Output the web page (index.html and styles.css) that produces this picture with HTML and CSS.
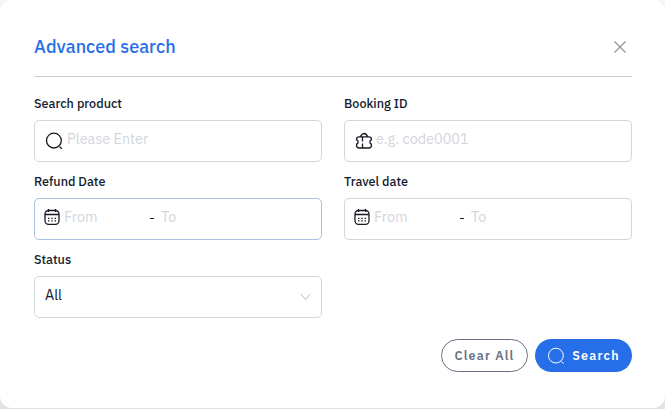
FILE: index.html
```html
<!DOCTYPE html>
<html lang="en">
<head>
<meta charset="utf-8">
<title>Advanced search</title>
<link rel="stylesheet" href="styles.css">
</head>
<body>
<svg class="defs" aria-hidden="true">
  <symbol id="search" viewBox="0 0 18 18"><circle cx="8.9" cy="8.6" r="7.4"/><path d="M14.8 14.6l.8 1.500M15.700 15.600l1.100 1.100"/></symbol>
  <symbol id="calendar" viewBox="0 0 16 18"><rect x="1" y="2.500" width="14" height="13.800" rx="3.500"/><path d="M1 6.500h14M4.500 1v3M11.500 1v3"/><path class="dots" d="M4 10.300h1.400M7.300 10.300h1.400M10.600 10.300H12M4 12.800h1.400M7.300 12.800h1.400M10.600 12.800H12"/></symbol>
  <symbol id="ticket" viewBox="0 0 18 18"><path d="M4 4.900h10c1.500 0 2.400.6 2.400 1.900v1c-2 .3-2 4 0 4.300v1.200c0 1.800-.8 2.700-2.400 2.700H4c-1.600 0-2.400-.9-2.400-2.700v-1.200c2-.3 2-4 0-4.300v-1c0-1.300.9-1.900 2.400-1.900zM5.200 4.700C6.300 2.900 7.700 1.500 9.100 1.500s2.700 1.300 3.500 3.100M7.500 5v4.500M7.500 11.500V16"/></symbol>
</svg>
<main class="dialog">
  <header class="header">
    <h1 class="title">Advanced search</h1>
    <svg class="close" viewBox="0 0 12 12"><path d="M.5.5l11 11M11.500.5l-11 11"/></svg>
  </header>
  <section class="fields">
    <div class="field">
      <span class="label">Search product</span>
      <div class="input"><svg class="icon"><use href="#search"/></svg><span class="placeholder">Please Enter</span></div>
    </div>
    <div class="field">
      <span class="label">Booking ID</span>
      <div class="input"><svg class="icon"><use href="#ticket"/></svg><span class="placeholder code">e.g. code0001</span></div>
    </div>
    <div class="field">
      <span class="label">Refund Date</span>
      <div class="input range active"><svg class="icon"><use href="#calendar"/></svg><span class="placeholder from">From</span><span class="dash"></span><span class="placeholder">To</span></div>
    </div>
    <div class="field">
      <span class="label">Travel date</span>
      <div class="input range"><svg class="icon"><use href="#calendar"/></svg><span class="placeholder from">From</span><span class="dash"></span><span class="placeholder">To</span></div>
    </div>
    <div class="field">
      <span class="label">Status</span>
      <div class="input select"><span class="value">All</span><svg class="chevron" viewBox="0 0 11 8"><path d="M.7.7l4.800 6 4.800-6"/></svg></div>
    </div>
  </section>
  <footer class="actions">
    <button class="button clear">Clear All</button>
    <button class="button submit"><svg class="icon"><use href="#search"/></svg><span>Search</span></button>
  </footer>
</main>
</body>
</html>
```
FILE: styles.css
```css
* { box-sizing: border-box; }
body {
  margin: 0;
  min-height: 409px;
  background: linear-gradient(#f6f6f6 50%, #e2e3e5 50%);
  font-family: "IBM Plex Sans", Roboto, "Liberation Sans", sans-serif;
  color: #141c2e;
}
.defs { display: none; }
svg { fill: none; stroke: currentColor; flex: none; }
.dialog {
  height: 408px;
  padding: 0 33px 0 34px;
  background: #fff;
  border-radius: 12px;
}
.header {
  height: 77px;
  padding: 17px 6px 0 0;
  border-bottom: 1px solid #ced0d8;
  display: flex;
  align-items: center;
  justify-content: space-between;
}
.title {
  margin: 0;
  font-size: 18px;
  line-height: 24px;
  font-weight: 500;
  letter-spacing: .04px;
  color: #266fe8;
}
.close { width: 12px; height: 12px; color: #929292; stroke-width: 1.2; }
.fields {
  display: grid;
  grid-template-columns: 288px 288px;
  column-gap: 22px;
  row-gap: 10px;
  padding-top: 17px;
}
.field { height: 68px; }
.label {
  display: block;
  height: 26px;
  padding-top: 1px;
  font-size: 12.600px;
  line-height: 16px;
  font-weight: 500;
  white-space: nowrap;
}
.input {
  height: 42px;
  border: 1px solid #d5d6da;
  border-radius: 5px;
  display: flex;
  align-items: center;
  padding: 0 10px 5px;
  font-size: 14.400px;
  line-height: 20px;
}
.input .icon { width: 18px; height: 18px; margin-top: 5px; color: #171a20; stroke-width: 1.300; }
.placeholder { color: #d3d5dd; margin-left: 4px; white-space: nowrap; }
.code { margin-left: 3px; }
.active { border-color: #a7c2e2; }
.range { padding-left: 9px; }
.range .icon { width: 16px; margin-top: 1px; }
.dots { stroke-width: 1.300; }
.from { width: 86px; }
.dash { width: 4px; height: 1.500px; margin: 4px 3px 0 0; background: #141c2e; }
.select { justify-content: space-between; }
.chevron { width: 11px; height: 8px; margin-top: 4px; color: #babbc0; }
.actions {
  display: flex;
  justify-content: flex-end;
  gap: 7px;
  padding-top: 21px;
}
.button {
  height: 33px;
  padding: 0 0 2px;
  border-radius: 17px;
  font: 600 12.500px/16px "IBM Plex Sans", Roboto, "Liberation Sans", sans-serif;
  letter-spacing: 1.200px;
  display: flex;
  align-items: center;
  justify-content: center;
}
.clear { width: 87px; border: 1px solid #687183; background: #fff; color: #687183; }
.submit { width: 97px; border: 0; background: #266fe8; color: #fff; gap: 7px; }
.submit .icon { width: 18px; height: 18px; margin-top: 3px; }
```
